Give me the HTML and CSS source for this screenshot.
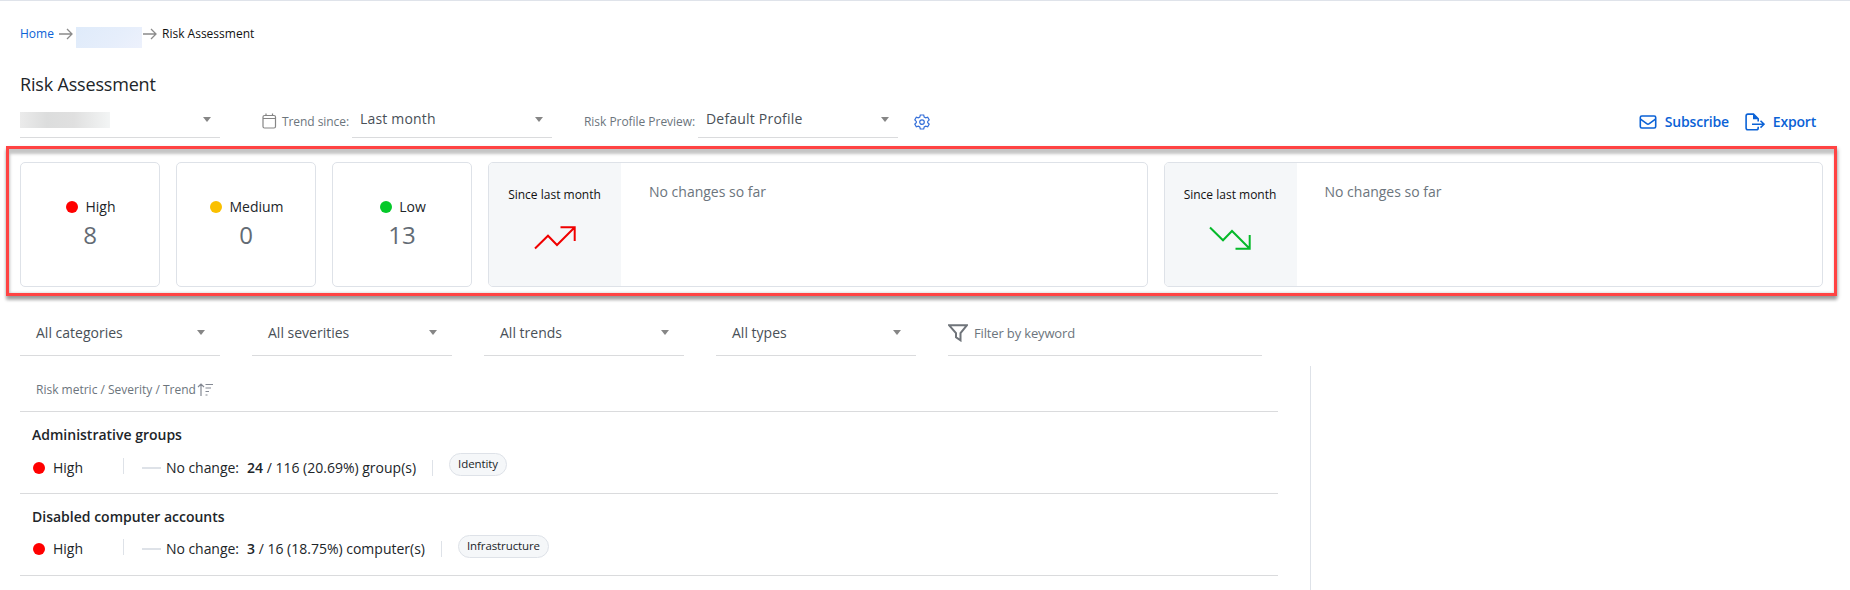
FILE: index.html
```html
<!DOCTYPE html>
<html lang="en">
<head>
<meta charset="utf-8">
<title>Risk Assessment</title>
<link rel="stylesheet" href="styles.css">
</head>
<body>
<nav class="crumbs">
  <a class="crumb-link">Home</a>
  <svg class="crumb-arrow" width="14" height="12" viewBox="0 0 14 12"><path d="M0 6H13M8 1L13 6L8 11"/></svg>
  <span class="crumb-mask"></span>
  <svg class="crumb-arrow second" width="14" height="12" viewBox="0 0 14 12"><path d="M0 6H13M8 1L13 6L8 11"/></svg>
  <span class="crumb-current">Risk Assessment</span>
</nav>
<h1 class="title">Risk Assessment</h1>
<div class="toolbar">
  <div class="select scope"><span class="scope-mask"></span><i class="caret"></i></div>
  <svg class="calendar" width="15" height="16" viewBox="0 0 15 16"><rect x="1" y="2.5" width="12.5" height="12.5" rx="1.5"/><path d="M1 5.500H13.5M4 0.5V3M10.5 0.5V3"/></svg>
  <span class="label trend-label">Trend since:</span>
  <div class="select"><span>Last month</span><i class="caret"></i></div>
  <span class="label profile-label">Risk Profile Preview:</span>
  <div class="select profile"><span>Default Profile</span><i class="caret"></i></div>
  <svg class="gear" width="16" height="16" viewBox="0 0 16 16"><path d="M6.3 1H9.7L10.2 3.1L11.7 3.9L13.7 3.2L15.2 6L13.7 7.4V8.8L15.2 10.1L13.7 12.8L11.7 12.2L10.2 13L9.7 15H6.3L5.8 13L4.3 12.2L2.3 12.8L.8 10.1L2.3 8.8V7.4L.8 6L2.3 3.2L4.3 3.9L5.8 3.1Z"/><circle cx="8" cy="8.1" r="2.3"/></svg>
  <div class="actions">
    <a class="action"><svg class="mail" width="18" height="14" viewBox="0 0 18 14"><rect x="1.3" y="1" width="15.4" height="12" rx="1.5"/><path d="M1.5 4.2L7.7 8.7Q9 9.6 10.3 8.7L16.5 4.2"/></svg><span>Subscribe</span></a>
    <a class="action export"><svg width="20" height="18" viewBox="0 0 20 18"><path d="M13.2 13.7V15Q13.2 16.8 11.4 16.8H2.9Q1.1 16.8 1.1 15V2.9Q1.1 1.1 2.9 1.1H8.5L13.2 5.8V8.5M7 11.2H19M15.5 7.8L19 11.2L15.5 14.6"/><path class="fold" d="M8 0.7V6.2H13.8Z"/></svg><span>Export</span></a>
  </div>
</div>
<section class="cards">
  <div class="card count"><div class="level"><i class="dot high"></i>High</div><div class="number">8</div></div>
  <div class="card count"><div class="level"><i class="dot medium"></i>Medium</div><div class="number">0</div></div>
  <div class="card count"><div class="level"><i class="dot low"></i>Low</div><div class="number">13</div></div>
  <div class="card trend">
    <div class="trend-head"><span>Since last month</span><svg class="up" width="42" height="24" viewBox="0 0 42 24"><path d="M1 22.5L14 9.7L23 19L40.5 1.5M26.5 1.3H40.7V15"/></svg></div>
    <div class="trend-text">No changes so far</div>
  </div>
  <div class="card trend">
    <div class="trend-head"><span>Since last month</span><svg class="down" width="42" height="24" viewBox="0 0 42 24"><path d="M1 1.5L14 14.3L23 5L40.5 22.5M26.5 22.7H40.7V9"/></svg></div>
    <div class="trend-text">No changes so far</div>
  </div>
</section>
<div class="filters">
  <div class="filter"><span>All categories</span><i class="caret"></i></div>
  <div class="filter"><span>All severities</span><i class="caret"></i></div>
  <div class="filter"><span>All trends</span><i class="caret"></i></div>
  <div class="filter"><span>All types</span><i class="caret"></i></div>
  <div class="filter keyword"><svg width="20" height="18" viewBox="0 0 20 18"><path d="M1 1.2H19L12.5 9.2V16.3L8 13.2V9.2Z"/></svg><span>Filter by keyword</span></div>
</div>
<main class="content">
  <div class="list">
    <div class="list-head"><span>Risk metric / Severity / Trend</span><svg width="17" height="14" viewBox="0 0 17 14"><path d="M4 13V1M1 4L4 1L7 4M8.500 1.500H16M8.500 5H14M8.500 8.500H12M8.500 12H10.500"/></svg></div>
    <article class="row">
      <h2 class="row-title">Administrative groups</h2>
      <div class="meta lower"><i class="dot high"></i><span class="severity">High</span><i class="bar first"></i><i class="dash"></i><span class="change">No change:</span><span class="value"><b>24</b> / 116 (20.69%) group(s)</span><i class="bar"></i><span class="tag">Identity</span></div>
    </article>
    <article class="row">
      <h2 class="row-title">Disabled computer accounts</h2>
      <div class="meta"><i class="dot high"></i><span class="severity">High</span><i class="bar first"></i><i class="dash"></i><span class="change">No change:</span><span class="value"><b>3</b> / 16 (18.75%) computer(s)</span><i class="bar"></i><span class="tag">Infrastructure</span></div>
    </article>
  </div>
  <aside class="detail"></aside>
</main>
</body>
</html>
```
FILE: styles.css
```css
* { box-sizing: border-box; }
body {
  margin: 0;
  height: 590px;
  overflow: hidden;
  padding: 0 27px 0 20px;
  border-top: 1px solid #dfe3ea;
  background: #fff;
  color: #212529;
  font: 14px/20px "Open Sans", "Noto Sans", sans-serif;
  display: flex;
  flex-direction: column;
  white-space: nowrap;
}
svg { fill: none; display: block; flex: none; }
.crumbs { display: flex; align-items: center; height: 65px; font-size: 12px; flex: none; }
.crumb-link { color: #0b62d6; width: 39px; }
.crumb-arrow { stroke: #8b8b8b; stroke-width: 1.3; }
.crumb-mask { width: 66px; height: 21px; margin: 8px 1px 0 3px; background: linear-gradient(135deg, #dfebfa, #e6eefb 60%, #edf1fc); }
.crumb-current { margin-left: 5px; color: #111; }
.title { margin: 0; height: 36px; line-height: 36px; font-size: 18px; font-weight: 400; letter-spacing: -.18px; flex: none; }
.toolbar { display: flex; align-items: center; height: 36px; flex: none; }
.select { position: relative; width: 200px; height: 36px; border-bottom: 1px solid #dadbdd; display: flex; align-items: center; justify-content: space-between; padding: 0 9px 1px 8px; color: #495057; letter-spacing: .18px; }
.profile { letter-spacing: .2px; }
.scope { padding-left: 0; }
.scope-mask { width: 90px; height: 16px; margin-top: 2px; background: linear-gradient(90deg, #ebebeb, #dcdddd 30%, #e0e0e0 60%, #f3f5f5); }
.caret { border: 4px solid transparent; border-top: 5px solid #868686; border-bottom: 0; }
.calendar { margin: 2px 5px 0 42px; stroke: #858585; stroke-width: 1.2; }
.label { font-size: 12px; color: #6c757d; margin-top: 3px; }
.trend-label { width: 70px; letter-spacing: -.07px; }
.profile-label { width: 114px; margin-left: 32px; letter-spacing: -.04px; }
.gear { margin: 3px 0 0 16px; stroke: #356fd9; stroke-width: 1.2; }
.actions { margin: 4px 7px 0 auto; display: flex; gap: 16px; }
.action { display: flex; align-items: center; gap: 8px; color: #0b62d6; font-weight: 600; letter-spacing: -.2px; }
.action svg { stroke: #0b62d6; stroke-width: 1.6; }
.action .fold { fill: #0b62d6; stroke: none; }
.cards { position: relative; margin-top: 24px; height: 125px; display: flex; gap: 16px; flex: none; }
.cards::after { content: ""; position: absolute; inset: -16px -14px -9px; border: 3px solid #ff4343; box-shadow: 0 4px 3px rgba(0,0,0,.28), 1px 2px 4px rgba(0,0,0,.2), inset 0 6px 3px -1px #c5c5c5, inset 1px 0 3px #c5c5c5; }
.card { border: 1px solid #dee2e8; border-radius: 5px; overflow: hidden; }
.count { width: 140px; padding-top: 32px; text-align: center; }
.level { height: 24px; line-height: 24px; display: flex; align-items: center; justify-content: center; gap: 7px; padding-left: 2px; }
.dot { width: 12px; height: 12px; border-radius: 50%; flex: none; }
.high { background: #f00; }
.medium { background: #fac000; }
.low { background: #05c92a; }
.number { font-size: 24px; line-height: 32px; color: #636b74; }
.trend { flex: 1; display: flex; }
.trend-head { width: 132px; background: #f5f7f9; display: flex; flex-direction: column; align-items: center; padding: 22px 1px 0 0; font-size: 12px; color: #111; }
.trend-head svg { margin: 21px 0 0; stroke-width: 2; }
.up { stroke: #f00000; }
.down { stroke: #05b92a; }
.trend-text { padding: 19px 0 0 28px; color: #6c757d; }
.filters { display: flex; gap: 32px; height: 46px; margin-top: 23px; flex: none; }
.filter { width: 200px; border-bottom: 1px solid #dadbdd; display: flex; align-items: center; justify-content: space-between; padding: 0 15px 0 16px; color: #495057; }
.keyword { width: 314px; justify-content: flex-start; padding: 0; gap: 6px; font-size: 13px; letter-spacing: -.15px; color: #6c757d; }
.keyword svg { stroke: #6f747a; stroke-width: 2; }
.content { flex: 1; display: flex; padding-top: 10px; }
.list { width: 1258px; }
.list-head { display: flex; align-items: center; gap: 1px; height: 46px; padding: 3px 0 0 16px; border-bottom: 1px solid #dadbdd; font-size: 12px; color: #6c757d; }
.list-head svg { stroke: #858a94; stroke-width: 1.2; }
.row { height: 82px; padding: 13px 0 0 12px; border-bottom: 1px solid #dadbdd; }
.row-title { margin: 0; font-size: 14px; line-height: 20px; font-weight: 600; }
.meta { display: flex; align-items: center; height: 44px; padding-left: 1px; }
.lower { padding-top: 1px; }
.lower .dot { margin-top: 0; }
.meta b { font-weight: 600; }
.severity { width: 70px; margin-left: 8px; }
.bar { width: 1px; height: 16px; background: #dee2e8; margin-left: 16px; }
.first { margin: -4px 0 0 0; }
.dash { width: 19px; height: 2px; margin: 0 5px 0 18px; background: #dee2e8; }
.change { width: 82px; letter-spacing: -.05px; }
.value { margin-left: -1px; }
.tag { margin: -6px 0 0 16px; height: 23px; line-height: 20px; border: 1px solid #dee2e8; border-radius: 12px; padding: 0 8px; background: #f5f7f9; font-size: 11.500px; letter-spacing: -.1px; }
.detail { flex: 1; margin-left: 32px; border-left: 1px solid #dee2e8; }
```
